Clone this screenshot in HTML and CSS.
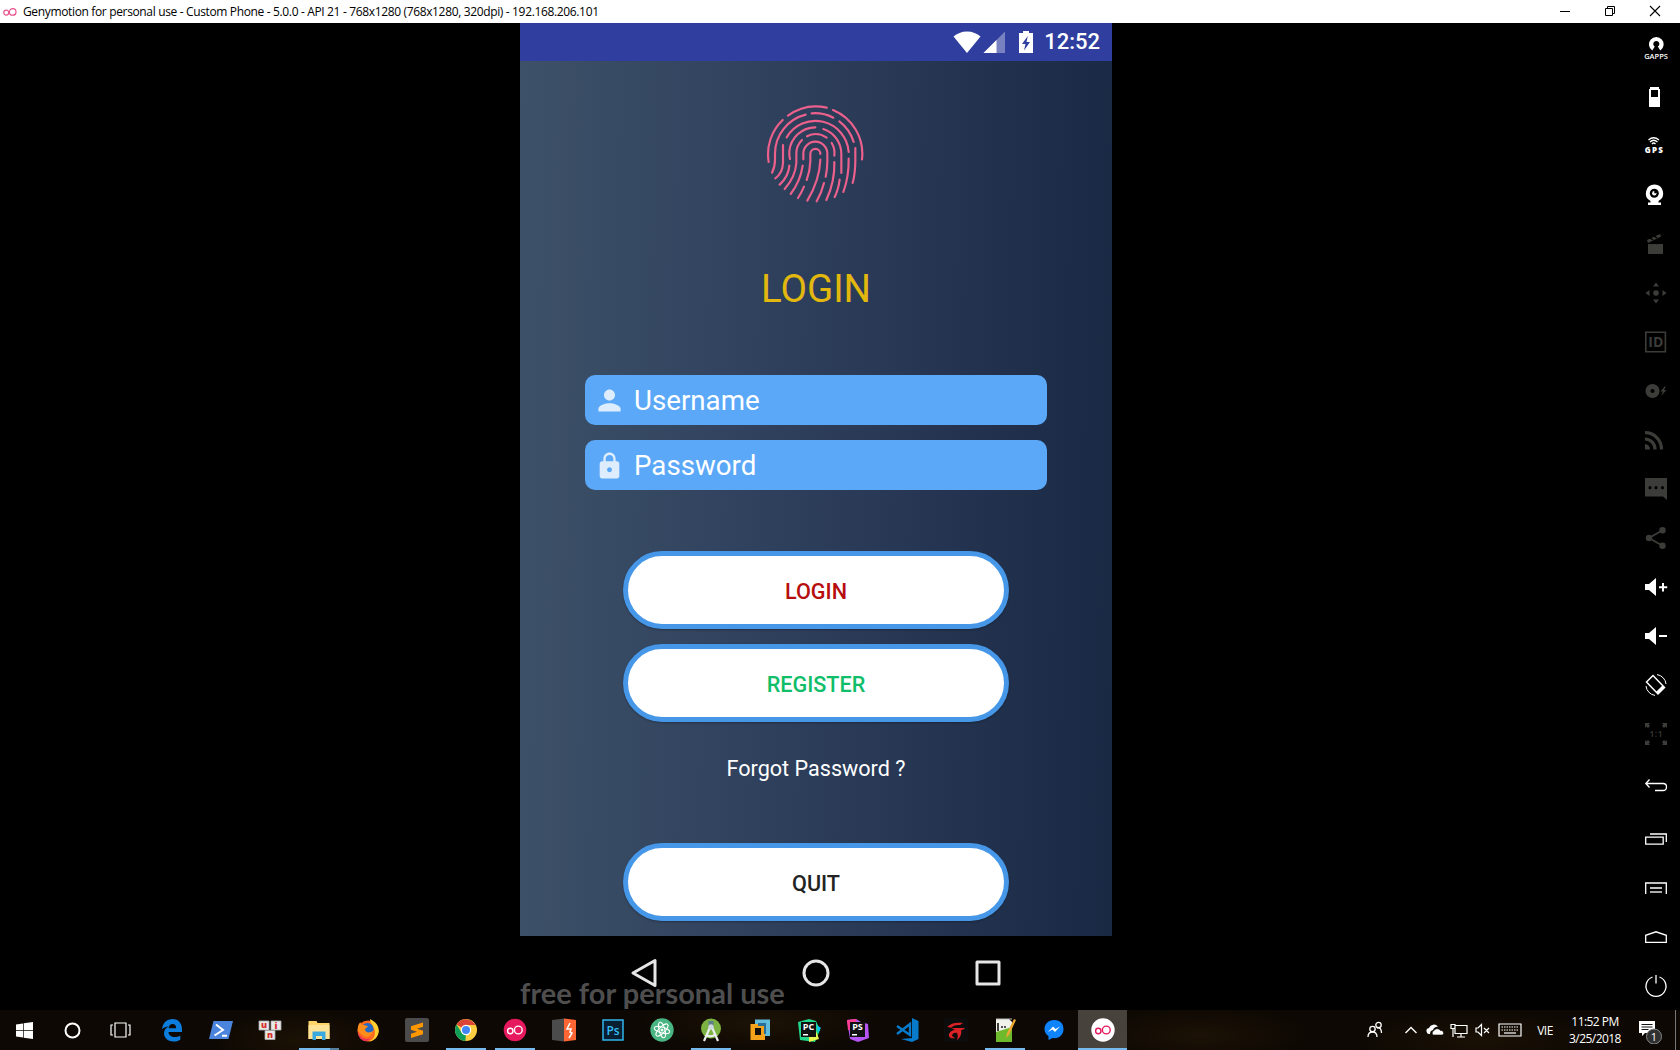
FILE: index.html
```html
<!DOCTYPE html>
<html lang="en">
<head>
<meta charset="utf-8">
<title>Genymotion for personal use</title>
<link rel="stylesheet" href="styles.css">
</head>
<body>
<header class="titlebar">
  <svg class="logo" width="14" height="10" viewBox="0 0 14 10" fill="none" stroke="#e8548b" stroke-width="1.2"><circle cx="3.3" cy="5.6" r="2.5"/><circle cx="9.7" cy="4.9" r="3.3"/></svg>
  <span class="title">Genymotion for personal use - Custom Phone - 5.0.0 - API 21 - 768x1280 (768x1280, 320dpi) - 192.168.206.101</span>
  <div class="wincontrols">
    <svg width="12" height="12" viewBox="0 0 12 12" stroke="#000"><path d="M1 6.5h10"/></svg>
    <svg width="12" height="12" viewBox="0 0 12 12" fill="none" stroke="#000"><path d="M1.5 3.500h7v7h-7zM3.500 3.500v-2h7v7h-2"/></svg>
    <svg width="12" height="12" viewBox="0 0 12 12" stroke="#000" stroke-width="1.1"><path d="M1 1l10 10M11 1L1 11"/></svg>
  </div>
</header>

<main class="stage">
  <section class="phone">
    <div class="status">
      <svg width="28" height="24" viewBox="0 0 28 24"><path d="M14 23L.5 6.500C4 3.500 8.500 1.500 14 1.500s10 2 13.500 5z" fill="#fff"/></svg>
      <svg class="signal" width="23" height="24" viewBox="0 0 23 24"><path d="M22 1.500V23H.5z" fill="#fff" opacity=".35"/><path d="M13.500 10v13H.5z" fill="#fff"/></svg>
      <svg class="batt" width="16" height="24" viewBox="0 0 16 24"><path d="M5 1h6v2h4v20H1V3h4z" fill="#fff"/><path d="M9.800 6L4 14h3.500L6 20.500 12 12H8.500z" fill="#303f9f"/></svg>
      <span class="time">12:52</span>
    </div>
    <div class="app">
      <svg class="finger" width="100" height="100" viewBox="80 70 300 300" fill="none" stroke="#ec608c" stroke-width="6.500" stroke-linecap="round">
        <path d="M146 108A142 142 0 0 1 262 84M281 91A142 142 0 0 1 368 239M130 121A142 142 0 0 0 88 247"/>
        <path d="M217 101A121 121 0 0 1 282 114M300 125A121 121 0 0 1 343 187M199 105A121 121 0 0 0 107 222V240Q107 262 98 279"/>
        <path d="M142 173A100 100 0 0 1 328 217M131 196V250Q130 280 108 296"/>
        <path d="M228 143A79 79 0 0 0 150 215Q149 226 152 238M252 148A79 79 0 0 1 306 222V280"/>
        <path d="M203 170A57 57 0 0 1 262 174M188 181A57 57 0 0 0 171 222V250Q168 292 136 328M277 190A57 57 0 0 1 285 228"/>
        <path d="M192 239V222A36 36 0 0 1 264 222V245Q264 270 259 291"/>
        <path d="M243 223A15 15 0 0 0 213 222V245Q212 275 202 301"/>
        <path d="M150 258Q148 290 121 315M190 258Q183 305 154 343M194 321Q186 340 176 355M243 240Q241 300 204 363M254 310Q247 338 232 365M285 247Q287 305 261 361M301 300Q297 330 286 352M328 237Q329 290 312 337M348 205V240Q348 280 340 310"/>
      </svg>
      <h1 class="heading">LOGIN</h1>
      <div class="field">
        <svg width="25" height="25" viewBox="3 3 18 18" fill="#deedfd"><path d="M12 12c2.210 0 4-1.790 4-4s-1.790-4-4-4-4 1.790-4 4 1.790 4 4 4zm0 2c-2.670 0-8 1.340-8 4v2h16v-2c0-2.660-5.330-4-8-4z"/></svg>
        <span>Username</span>
      </div>
      <div class="field">
        <svg width="25" height="27" viewBox="2.500 .500 19 22" fill="#deedfd"><path d="M18 8h-1V6c0-2.760-2.240-5-5-5S7 3.240 7 6v2H6c-1.100 0-2 .9-2 2v10c0 1.100.9 2 2 2h12c1.100 0 2-.9 2-2V10c0-1.100-.9-2-2-2zm-6 9c-1.100 0-2-.9-2-2s.9-2 2-2 2 .9 2 2-.9 2-2 2zm3.100-9H8.900V6c0-1.710 1.390-3.100 3.100-3.100 1.710 0 3.100 1.390 3.100 3.100v2z"/></svg>
        <span>Password</span>
      </div>
      <button class="btn login">LOGIN</button>
      <button class="btn register">REGISTER</button>
      <a class="forgot">Forgot Password ?</a>
      <button class="btn quit">QUIT</button>
    </div>
    <div class="navbar">
      <svg width="32" height="36" viewBox="0 0 32 36" fill="none" stroke="#e6e6e6" stroke-width="3" stroke-linejoin="round"><path d="M27 5.500v25L5 18z"/></svg>
      <svg width="32" height="36" viewBox="0 0 32 36" fill="none" stroke="#e6e6e6" stroke-width="3"><circle cx="16" cy="18" r="12"/></svg>
      <svg width="32" height="36" viewBox="0 0 32 36" fill="none" stroke="#e6e6e6" stroke-width="3" stroke-linejoin="round"><path d="M5 7h22v22H5z"/></svg>
      <span class="watermark">free for personal use</span>
    </div>
  </section>

  <aside class="tools">
    <div class="tool"><svg viewBox="0 0 24 24"><path d="M8.300 14.500A7.300 7.300 0 1 1 16.300 14.500L13.800 10.500A3 3 0 1 0 10.800 10.500z" fill="#fff"/><text x="12" y="22.500" font-size="7.500" font-weight="600" text-anchor="middle" fill="#fff">GAPPS</text></svg></div>
    <div class="tool"><svg viewBox="0 0 24 24"><path d="M6 2h9v2h1v18H5V4h1zM7 5v7h7V5z" fill="#fff" fill-rule="evenodd"/></svg></div>
    <div class="tool"><svg viewBox="0 0 24 24"><g fill="none" stroke="#fff" stroke-width="1.300"><path d="M4.500 6Q9.500 1.500 15 6M6 8Q9.500 4.500 13.500 8M8 10q1.500-2 3.500 0"/></g><text x="9.800" y="19" font-size="8" font-weight="800" text-anchor="middle" textLength="18" fill="#fff">GPS</text></svg></div>
    <div class="tool"><svg viewBox="0 0 24 24"><path d="M10.500 1.500a8.700 8.700 0 0 1 4 16.400V19.500H17V22H4V19.500H6.500V17.900a8.700 8.700 0 0 1 4-16.400z" fill="#fff"/><circle cx="10.300" cy="10.300" r="4.500"/><circle cx="10.300" cy="10.300" r="2.200" fill="#fff"/><path d="M10.300 10.300V7.500h2.500v2.800z"/></svg></div>
    <div class="tool off"><svg viewBox="0 0 24 24"><path d="M4 12h15v10H4zM3 8l13-6 1 2.500L4 11z"/><path d="M6 6l3 2M10 4l3 2M7 12l2-1.500M12 12l2-1.500" stroke="#000" stroke-width="1.500"/></svg></div>
    <div class="tool off"><svg viewBox="0 0 24 24"><circle cx="12" cy="12" r="2.800"/><path d="M12 1.500l3 4H9zM12 22.500l3-4H9zM1.500 12l4-3v6zM22.500 12l-4-3v6z"/></svg></div>
    <div class="tool off"><svg viewBox="0 0 24 24"><path d="M1.800 2.200h19.600v19.600H1.800z" fill="none" stroke="#3c3c39" stroke-width="1.600"/><text x="11.800" y="17" font-size="14" font-weight="700" text-anchor="middle">ID</text></svg></div>
    <div class="tool off"><svg viewBox="0 0 24 24"><path fill-rule="evenodd" d="M8.500 5a7 7 0 1 0 .01 0zM8.500 10a2 2 0 1 1-.01 0z"/><path d="M20.500 7.500l-4 5h2.300l-1.500 4.500 5-6h-2.300l1.800-3.500z"/></svg></div>
    <div class="tool off"><svg viewBox="0 0 24 24"><g fill="none" stroke="#3c3c39" stroke-width="3.200"><path d="M1 4.600A16.500 16.500 0 0 1 17.500 21.500M1 11A10 10 0 0 1 11 21.500"/></g><path d="M1 16a5.500 5.500 0 0 1 5 5.500H1z"/></svg></div>
    <div class="tool off"><svg viewBox="0 0 24 24"><path d="M1 1h22v22l-4-3.500H1z"/><g fill="#000"><circle cx="6" cy="10.700" r="1.600"/><circle cx="12" cy="10.700" r="1.600"/><circle cx="18.500" cy="10.700" r="1.600"/></g></svg></div>
    <div class="tool off"><svg viewBox="0 0 24 24"><circle cx="5" cy="12" r="3.200"/><circle cx="18.500" cy="4.200" r="3.200"/><circle cx="18.500" cy="19.800" r="3.200"/><path d="M18.500 4.200L5 12l13.500 7.800" fill="none" stroke="#3c3c39" stroke-width="1.800"/></svg></div>
    <div class="tool"><svg viewBox="0 0 24 24" fill="#fff"><path d="M1 9h4l7-6v18l-7-6H1zM18 8h2v3.200h3.200v2H20V16.500h-2v-3.300h-3v-2h3z"/></svg></div>
    <div class="tool"><svg viewBox="0 0 24 24" fill="#fff"><path d="M1 9h4l7-6v18l-7-6H1zM15 11h8v2h-8z"/></svg></div>
    <div class="tool"><svg viewBox="0 0 24 24" fill="none" stroke="#fff"><path d="M2.500 9L9 2.500l11.500 12L14 21z" stroke-width="1.500"/><path d="M13 20l6.500-6.500" stroke-width="3"/><path d="M13 1.600A10.500 10.500 0 0 1 22 11M11 22.400A10.500 10.500 0 0 1 2 13" stroke-width="1"/></svg></div>
    <div class="tool off"><svg viewBox="0 0 24 24"><path d="M1 1h5L4.700 2.500 6 4 4 6 2.500 4.600 1 6zM23 1h-5l1.300 1.500L18 4l2 2 1.500-1.400L23 6zM1 23h5l-1.300-1.500L6 20l-2-2-1.500 1.400L1 18zM23 23h-5l1.300-1.500L18 20l2-2 1.500 1.400L23 18z"/><text x="12" y="15" font-size="8.500" font-weight="600" text-anchor="middle" textLength="13">1:1</text></svg></div>
    <div class="tool nav first"><svg viewBox="0 0 24 24"><path d="M5.500 2.500L1.800 6.500l3.700 4M2 6.500h17q3.500 0 3.500 3.500t-3.500 3.500h-8"/></svg></div>
    <div class="tool nav"><svg viewBox="0 0 24 24"><path d="M1.700 10.200h17.500v7H1.700zM6 7h16.300v8"/></svg></div>
    <div class="tool nav"><svg viewBox="0 0 24 24"><path d="M1.700 18V7h20.600v11M6 12h12"/><path d="M6 16h12" stroke="#aaa" stroke-width="2"/></svg></div>
    <div class="tool nav"><svg viewBox="0 0 24 24"><path d="M1.700 17.300v-7l10.300-3.500 10.300 3.500v7z"/></svg></div>
    <div class="tool nav"><svg viewBox="0 0 24 24"><path d="M8.500 3A10 10 0 1 0 15.500 3M12 1v8.500"/></svg></div>
  </aside>
</main>

<footer class="taskbar">
  <div class="sys"><svg width="17" height="17" viewBox="0 0 17 17" fill="#fff"><path d="M0 2.400l7-1V8H0zM7.700 1.300L17 0v8H7.700zM0 8.800h7v6.700l-7-1zM7.700 8.800H17V17l-9.300-1.300z"/></svg></div>
  <div class="sys"><svg width="17" height="17" viewBox="0 0 17 17" fill="none" stroke="#fff" stroke-width="2"><circle cx="8.500" cy="8.500" r="7"/></svg></div>
  <div class="sys"><svg width="21" height="16" viewBox="0 0 21 16" fill="none" stroke="#fff" stroke-width="1.200"><path d="M5 1h11v14H5zM3 3H1v10h2M18 3h2v10h-2"/></svg></div>
  <div class="apps">
    <div class="appicon"><svg viewBox="0 0 24 24"><path d="M2 11C3 4.500 7 1 12.500 1 19 1 22 6 22 11v3H8.500c.2 3.500 3 5 6 5 2.200 0 4.200-.6 5.800-1.600v4.300C18.300 23 16 23.500 13.500 23.500 7 23.500 4 19 4 15.500 4 12 6 9.500 9 8.500 5.500 8.500 3 10 2 11zM8.700 10.200h7.500C16.200 7.500 14.800 6 12.500 6 10.200 6 9 8 8.700 10.200z" fill="#0d7ddd"/></svg></div>
    <div class="appicon"><svg viewBox="0 0 24 24"><path d="M4.500 3H24l-4.500 18H0z" fill="#4a84dd"/><path d="M7 6.500l7 5.500-8.500 5.500M13 17.800h5" stroke="#fff" stroke-width="2" fill="none"/></svg></div>
    <div class="appicon"><svg viewBox="0 0 24 24"><g fill="#e8e8e8" stroke="#aaa" stroke-width=".8"><path d="M1 3h10v9H1zM13 3h10v9H13zM7 12.500h10v9H7z"/></g><g font-size="9" font-weight="800" fill="#d92a2a" text-anchor="middle"><text x="6" y="10">u</text><text x="18" y="10.500">i</text><text x="12" y="19.500">n</text></g></svg></div>
    <div class="appicon run stacked"><svg viewBox="0 0 24 24"><path d="M1.500 3h8l1 2H22.500v16h-21z" fill="#ffd56a"/><path d="M1.500 7h21v14h-21z" fill="#ffe396"/><path d="M5.500 13.500h13V22h-3.500v-4H9v4H5.500z" fill="#3aa9e0"/></svg></div>
    <div class="appicon"><svg viewBox="0 0 24 24"><circle cx="12" cy="13" r="10.500" fill="#ff6a1f"/><path d="M14 1c6 3 9 7 8.800 12.500C22 19 18 23 13 23.500c6-3 7-8 5-13C17 7 14 5 14 1z" fill="#ffcf30"/><circle cx="11.500" cy="11" r="6" fill="#2368c4"/><path d="M1.700 13C1.500 8 3 5 4.500 4c0 2 1 3 3 3 1 0 3 1 4.500 1-1 2-3 2-3 4 1 3 5 3 8 1-1 5-6 7-9 5z" fill="#ff8d1c"/><path d="M2 13c2 8 8 9 13 7-2 3-5 3.600-8 2.500C4 21 2 18 2 13z" fill="#ed2f58"/></svg></div>
    <div class="appicon"><svg viewBox="0 0 24 24"><rect width="24" height="24" rx="2" fill="#4b4b4b"/><path d="M6 8.200l12-3.700v4.300l-6 2 6 2v3.500L6 20v-4.200l6-2-6-2z" fill="#ff9800"/></svg></div>
    <div class="appicon run"><svg viewBox="0 0 24 24"><circle cx="12" cy="12" r="11" fill="#ffcd40"/><path d="M12 12L2.500 6.500A11 11 0 0 1 21.500 7H12z" fill="#db4437"/><path d="M2.500 6.500l6 9.500 3.500-1-.6 8A11 11 0 0 1 2.500 6.500z" fill="#0f9d58"/><circle cx="12" cy="12" r="5.200" fill="#fff"/><circle cx="12" cy="12" r="4" fill="#4285f4"/></svg></div>
    <div class="appicon run"><svg viewBox="0 0 24 24"><circle cx="12" cy="12" r="11.300" fill="#e6195f"/><g fill="none" stroke="#fff" stroke-width="1.400"><circle cx="7.300" cy="13" r="2.700"/><circle cx="15.300" cy="12" r="3.900"/></g></svg></div>
    <div class="appicon"><svg viewBox="0 0 24 24"><path d="M0 2l12-1.500v23L0 22z" fill="#4b4b4b"/><path d="M12 .5L24 2v20l-12 1.500z" fill="#ff6633"/><path d="M18 5l-3 6h4l-1 3 2 1-3 5" stroke="#fff" stroke-width="1.500" fill="none"/></svg></div>
    <div class="appicon"><svg viewBox="0 0 24 24"><path d="M2 2h20v20H2z" fill="#081e31" stroke="#31b5ec" stroke-width="1.500"/><text x="12" y="16.500" font-size="12" font-weight="600" text-anchor="middle" fill="#36bdf5">Ps</text></svg></div>
    <div class="appicon"><svg viewBox="0 0 24 24"><circle cx="12" cy="12" r="11.700" fill="#48b583"/><g fill="none" stroke="#fff"><ellipse cx="12" cy="12" rx="8" ry="2.900" transform="rotate(15 12 12)"/><ellipse cx="12" cy="12" rx="8" ry="2.900" transform="rotate(75 12 12)"/><ellipse cx="12" cy="12" rx="8" ry="2.900" transform="rotate(135 12 12)"/></g><circle cx="12" cy="12" r="1.500" fill="#fff"/></svg></div>
    <div class="appicon run"><svg viewBox="0 0 24 24"><circle cx="12" cy="10.500" r="10" fill="#7cb342"/><path d="M12 7L5 23M12 7l7 16M7 17q5 3 10-1" stroke="#eceff1" stroke-width="2.200" fill="none"/><path d="M9.500 3h5v6h-5z" fill="#607d8b"/><circle cx="12" cy="9" r="2.700" fill="#cfd8dc"/></svg></div>
    <div class="appicon"><svg viewBox="0 0 24 24"><path d="M7 1.500h15V18H7z" fill="#62bddd"/><path d="M2.500 6H17v16H2.500z" fill="#f5a31a"/><path d="M7 10h6v7H7z" fill="#15100a"/><path d="M10 5h8v11h-2V8h-6z" fill="#286e96"/></svg></div>
    <div class="appicon"><svg viewBox="0 0 24 24"><path d="M1 4l11-3 7 2 4 9-5 12L3 22z" fill="#21d789"/><path d="M12 17l7-4 3 8-10 3z" fill="#e9f650"/><path d="M20 7l4 3-3 5z" fill="#07c3f2"/><path d="M4 4h15v15H4z" fill="#111"/><text x="11.500" y="12" font-size="9" font-weight="700" text-anchor="middle" fill="#fff">PC</text><path d="M6 16h5v1.500H6z" fill="#fff"/></svg></div>
    <div class="appicon"><svg viewBox="0 0 24 24"><path d="M1 2l9-1 5 3 7 2 1 14-11 4-8-3z" fill="#b656f2"/><path d="M1 2l9-1 1 9-9 2z" fill="#ff3d92"/><path d="M4 4h15v15H4z" fill="#111"/><text x="11.500" y="12" font-size="9" font-weight="700" text-anchor="middle" fill="#fff">PS</text><path d="M6 16h5v1.500H6z" fill="#fff"/></svg></div>
    <div class="appicon"><svg viewBox="0 0 24 24"><path d="M17 0l6.500 3v18L17 24 6 21l11-1z" fill="#087acc"/><path d="M2 8l13 9V6L2 16" stroke="#087acc" stroke-width="2.400" fill="none"/></svg></div>
    <div class="appicon"><svg viewBox="0 0 24 24"><rect width="24" height="24" rx="2" fill="#0c0c0c"/><path d="M3 9c4-4 9-5 16-4l-3 2c-4-.5-7 .5-9 3h14c-2 2-3 2-4 2 1 4-1 8-4 10 1-3 1-5 0-7-3-1-5 1-5 3l3 2c-4 1-7-1-6-4 1-2 3-4 6-4-3-2-5-3-8-3z" fill="#dd2227"/></svg></div>
    <div class="appicon run"><svg viewBox="0 0 24 24"><path d="M3 1h13l3 3v19H3z" fill="#f2f2ec"/><path d="M3 14l16-5v15H3z" fill="#6fba2c"/><path d="M3 1h16" stroke="#bbb"/><path d="M5 5v8M8 9h2M11 9h2" stroke="#222" stroke-width="1.700"/><path d="M21 1l2 1-7 15-3 3 1-5z" fill="#eca832"/></svg></div>
    <div class="appicon"><svg viewBox="0 0 24 24"><path d="M12 2C6.500 2 2.500 6 2.500 11c0 3 1.500 5.500 4 7v4l4-2c6.500 1 11-3 11-9S17.500 2 12 2z" fill="#0f83fb"/><path d="M6 14l5-5.500 2.500 2.500 4.500-2.500-5 5.500-2.500-2.500z" fill="#fff"/></svg></div>
    <div class="appicon run active"><svg viewBox="0 0 24 24"><circle cx="12" cy="12" r="11.700" fill="#fff"/><g fill="none" stroke="#e6195f" stroke-width="1.400"><circle cx="7.300" cy="13" r="2.700"/><circle cx="15.300" cy="12" r="3.900"/></g></svg></div>
  </div>
  <div class="tray">
    <svg class="people" width="24" height="20" viewBox="0 0 24 20" fill="none" stroke="#fff" stroke-width="1.300"><circle cx="9.500" cy="9" r="2.700"/><circle cx="15.500" cy="5" r="2.700"/><path d="M5 17q0-5 4.500-5t4.500 5M14 8q4.500-1 4.500 5"/></svg>
    <svg width="24" height="20" viewBox="0 0 24 20" fill="none" stroke="#fff" stroke-width="1.400"><path d="M6.500 13l5.500-5.500 5.500 5.500"/></svg>
    <svg width="24" height="20" viewBox="0 0 24 20" fill="#fff"><path d="M7 14a3 3 0 0 1-1-6 5 5 0 0 1 9-1 4 4 0 0 0-5 3q-3 .5-3 4z"/><path d="M10 15a2.500 2.500 0 0 1 .5-4 4 4 0 0 1 7-.5 2.500 2.500 0 0 1 2 4.500z" stroke="#0b0703" stroke-width=".6"/></svg>
    <svg width="24" height="20" viewBox="0 0 24 20" fill="none" stroke="#fff" stroke-width="1.200"><path d="M8 5.500h12v8H8zM14 13.500V17M10 17h8M4 4.500h4v4H4zM6 8.500V17"/></svg>
    <svg width="24" height="20" viewBox="0 0 24 20" fill="none" stroke="#fff" stroke-width="1.200"><path d="M5 8h2l3.500-3.500v11L7 12H5zM13 8l5 5M18 8l-5 5"/></svg>
    <svg width="30" height="20" viewBox="0 0 30 20" fill="none" stroke="#fff" stroke-width="1.200"><path d="M4 4h22v12H4z"/><path d="M6.500 7h17.500M6.500 10h17.500" stroke-dasharray="1.500 1"/><path d="M9 13h12"/></svg>
    <span class="lang">VIE</span>
    <div class="clock"><span>11:52 PM</span><span>3/25/2018</span></div>
    <div class="action"><svg width="28" height="28" viewBox="0 0 28 28"><path d="M3 5h16v12H9l-3 3v-3H3z" fill="#fff"/><path d="M5.500 8.500h11M5.500 11h11M5.500 13.500h7" stroke="#111"/><circle cx="18" cy="20.500" r="7.500" fill="#303030" stroke="#888"/><text x="18" y="24.500" font-size="11" text-anchor="middle" fill="#fff">1</text></svg></div>
  </div>
</footer>
</body>
</html>
```
FILE: styles.css
```css
* { box-sizing: border-box; }
body {
  margin: 0;
  width: 1680px;
  height: 1050px;
  overflow: hidden;
  display: flex;
  flex-direction: column;
  background: #000;
  font-family: "Open Sans", "Noto Sans", sans-serif;
}
svg { display: block; flex: none; }

.titlebar {
  height: 23px;
  flex: none;
  display: flex;
  align-items: center;
  background: #fff;
  padding: 0 19px 0 3px;
}
.title {
  margin-left: 6px;
  font-size: 12px;
  letter-spacing: -0.35px;
  color: #000;
  white-space: nowrap;
}
.wincontrols {
  margin-left: auto;
  display: flex;
  gap: 33px;
  padding-bottom: 2px;
}

.stage {
  height: 987px;
  flex: none;
  display: flex;
  justify-content: space-between;
  padding-left: 520px;
}
.phone {
  width: 592px;
  display: flex;
  flex-direction: column;
  font-family: Roboto, sans-serif;
}
.status {
  height: 38px;
  flex: none;
  display: flex;
  align-items: center;
  justify-content: flex-end;
  padding-right: 12px;
  background: #303f9f;
  color: #fff;
}
.signal { margin-left: 2px; }
.batt { margin-left: 12px; }
.time {
  margin-left: 10px;
  font-size: 22px;
  font-weight: 500;
  line-height: 38px;
}
.app {
  height: 875px;
  flex: none;
  display: flex;
  flex-direction: column;
  align-items: center;
  padding-top: 42px;
  background: linear-gradient(91deg, #3d5168, #2d3e5b 48%, #23334f 75%, #192843);
}
.heading {
  margin: 61px 0 61px;
  height: 50px;
  line-height: 50px;
  font-size: 38.5px;
  font-weight: 400;
  color: #e2b80f;
}
.field {
  width: 462px;
  height: 50px;
  flex: none;
  margin-bottom: 15px;
  padding-left: 12px;
  display: flex;
  align-items: center;
  gap: 12px;
  border-radius: 10px;
  background: #5aa8f7;
  color: #fff;
  font-size: 27.7px;
  line-height: 50px;
}
.field span { padding-top: 2px; }
.btn {
  width: 386px;
  height: 78px;
  flex: none;
  padding: 2px 0 0;
  border: 5px solid #4797e8;
  border-radius: 39px;
  background: #fff;
  box-shadow: 0 1px 2px rgba(0, 0, 0, .3);
  font: 500 21.6px Roboto, sans-serif;
}
.login { margin-top: 46px; color: #b60d0d; }
.register { margin-top: 15px; color: #10bd69; }
.forgot {
  margin-top: 31px;
  height: 32px;
  line-height: 32px;
  font-size: 21.6px;
  color: #fff;
}
.quit { margin-top: 58px; color: #222; }

.navbar {
  position: relative;
  flex: 1;
  display: flex;
  justify-content: center;
  gap: 140px;
  padding-top: 19px;
  overflow: hidden;
}
.watermark {
  position: absolute;
  left: 0;
  top: 37px;
  font: 700 29px/40px Lato, sans-serif;
  color: rgba(120, 120, 120, .68);
  white-space: nowrap;
}

.tools {
  width: 48px;
  display: flex;
  flex-direction: column;
}
.tool {
  height: 49.070px;
  flex: none;
  display: flex;
  align-items: center;
  justify-content: center;
}
.tool svg { width: 24px; height: 24px; }
.off svg { fill: #3c3c39; }
.nav svg { fill: none; stroke: #fff; stroke-width: 1.300; }
.first { margin-top: 6px; }

.taskbar {
  height: 40px;
  flex: none;
  display: flex;
  color: #fff;
  background:
    radial-gradient(ellipse 90px 30px at 300px 30px, #1c1205, transparent),
    radial-gradient(ellipse 120px 30px at 760px 12px, #1d1306, transparent),
    radial-gradient(ellipse 110px 30px at 1200px 25px, #1c1206, transparent),
    radial-gradient(ellipse 130px 30px at 1480px 30px, #1a1105, transparent),
    #0d0803;
}
.sys {
  width: 48px;
  display: flex;
  align-items: center;
  justify-content: center;
}
.apps { display: flex; padding-left: 3px; }
.appicon {
  width: 49px;
  display: flex;
  align-items: center;
  justify-content: center;
  background: no-repeat center bottom / 40px 2px;
}
.appicon svg { width: 24px; height: 24px; }
.run { background-image: linear-gradient(#76b9ed, #76b9ed); }
.stacked { background-image: linear-gradient(90deg, #76b9ed 78%, #55809f 78%); }
.active { background-color: #48423d; background-size: 100% 2px; }
.tray {
  margin-left: auto;
  display: flex;
  align-items: center;
  width: 317px;
}
.people { margin-right: 12px; }
.lang {
  width: 40px;
  text-align: center;
  font-size: 12px;
  letter-spacing: -0.5px;
}
.clock {
  width: 60px;
  display: flex;
  flex-direction: column;
  align-items: center;
  font-size: 12px;
  line-height: 17.500px;
  letter-spacing: -0.55px;
}
.action {
  margin-left: 11px;
  height: 40px;
  width: 40px;
  padding-top: 6px;
  border-right: 1px solid #777;
}
```
